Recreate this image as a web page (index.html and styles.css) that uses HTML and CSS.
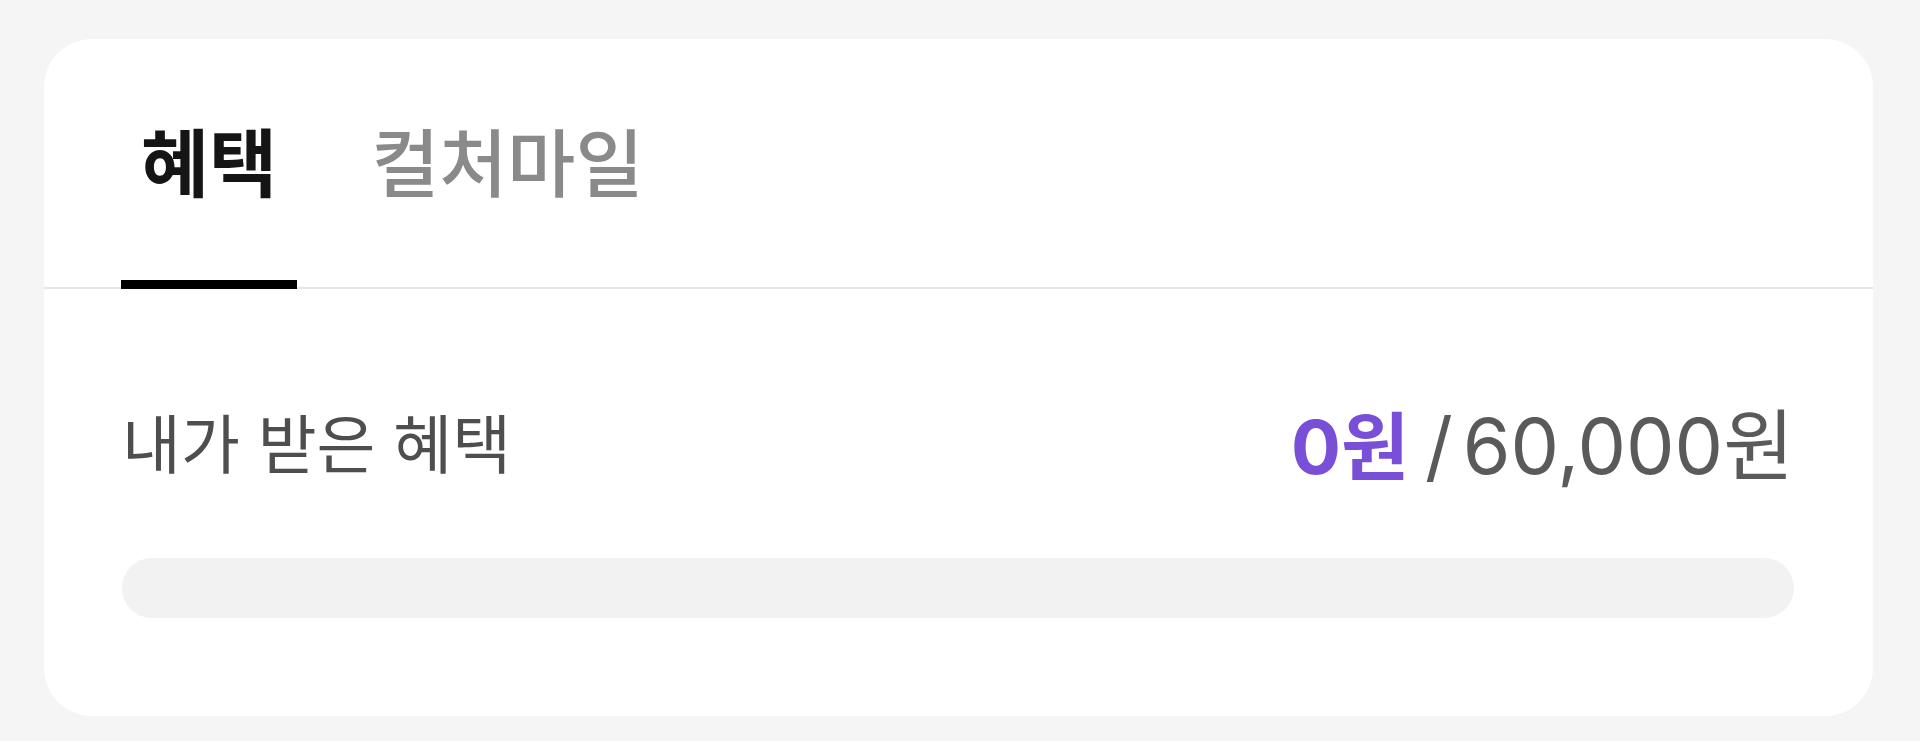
FILE: index.html
```html
<!DOCTYPE html>
<html lang="ko">
<head>
<meta charset="utf-8">
<link rel="stylesheet" href="styles.css">
</head>
<body>
<div class="card">
  <div class="tabs">
    <div class="tab active">혜택</div>
    <div class="tab">컬처마일</div>
  </div>
  <div class="content">
    <div class="row">
      <span class="label">내가 받은 혜택</span>
      <span class="amount"><span class="got">0원</span><span class="slash">/</span><span class="total">60,000원</span></span>
    </div>
    <div class="bar"></div>
  </div>
</div>
</body>
</html>
```

FILE: styles.css
```css
html, body {
  margin: 0;
  padding: 0;
}
body {
  background: #f5f5f5;
  padding: 39px 47px 25px 44px;
  font-family: Inter, "Noto Sans CJK KR", sans-serif;
}
.card {
  background: #ffffff;
  border-radius: 48px;
  height: 677px;
  box-sizing: border-box;
  overflow: hidden;
}
.tabs {
  display: flex;
  gap: 54px;
  height: 250px;
  box-sizing: border-box;
  padding: 0 77px;
  border-bottom: 2px solid #e6e6e6;
}
.tab {
  position: relative;
  display: flex;
  align-items: center;
  padding: 0 20px 10px;
  font-family: "Noto Sans CJK KR", sans-serif;
  font-size: 74px;
  font-weight: 500;
  color: #8a8a8a;
}
.tab.active {
  color: #151515;
  font-weight: 700;
}
.tab.active::after {
  content: "";
  position: absolute;
  left: 0;
  right: 0;
  bottom: -2px;
  height: 9px;
  background: #000;
}
.content {
  padding: 111px 79px 0 78px;
}
.row {
  display: flex;
  justify-content: space-between;
  align-items: center;
  height: 80px;
}
.label {
  font-family: "Noto Sans CJK KR", sans-serif;
  font-size: 64px;
  color: #4e4e4e;
}
.amount {
  font-size: 77px;
  color: #5a5a5a;
}
.got {
  color: #7a4fd8;
  font-weight: 700;
  font-size: 74px;
}
.slash {
  margin: 0 10px 0 16px;
}
.bar {
  margin-top: 78px;
  height: 60px;
  border-radius: 30px;
  background: #f2f2f2;
}
```
